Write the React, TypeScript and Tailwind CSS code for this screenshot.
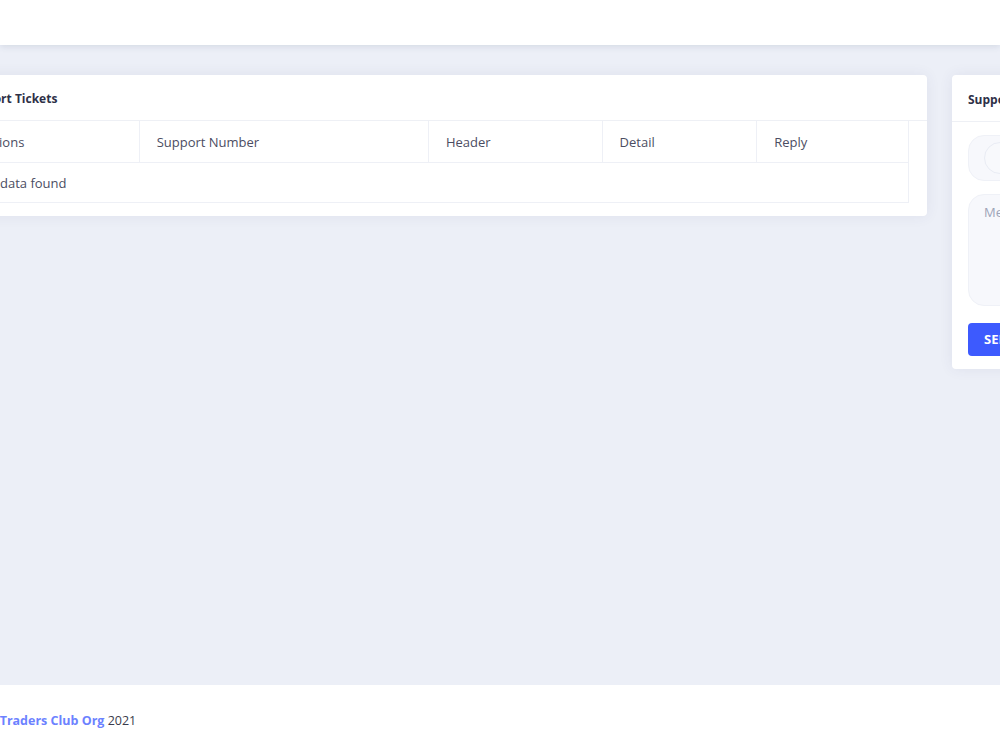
import React from "react";

const columns = [
  { label: "Actions", w: "w-[177px]" },
  { label: "Support Number", w: "w-[290px]" },
  { label: "Header", w: "w-[174px]" },
  { label: "Detail", w: "w-[155px]" },
  { label: "Reply", w: "w-[152px]" },
];

export default function App() {
  return (
    <div
      className="w-[1000px] h-[750px] overflow-hidden flex flex-col bg-[#eceff7] text-[#3d3f52]"
      style={{ fontFamily: '"Open Sans", "Noto Sans", sans-serif' }}
    >
      {/* Top bar */}
      <header className="h-[45px] shrink-0 bg-white shadow-[0_2px_6px_rgba(60,70,110,0.12)] relative z-10" />

      {/* Content */}
      <main className="flex-1 pt-[30px]">
        <div className="flex items-start gap-[25px] ml-[-56px]">
          {/* Tickets list */}
          <section className="w-[983px] shrink-0 bg-white rounded-[4px] shadow-[0_0_14px_rgba(60,70,120,0.08)] pb-[13px]">
            <div className="h-[46px] pt-[3px] flex items-center px-[20px] border-b border-[#eef0f5]">
              <h2 className="text-[12px] font-bold text-[#2e3047]">Support Tickets</h2>
            </div>
            <div className="px-[18px]">
              <table className="border-collapse text-[13px] text-[#4b4d62]">
                <thead>
                  <tr className="h-[41px]">
                    {columns.map((c) => (
                      <th
                        key={c.label}
                        className={`${c.w} text-left font-normal pl-[17px] pr-2 pt-[3px] border border-t-0 border-[#eef0f6]`}
                      >
                        {c.label}
                      </th>
                    ))}
                  </tr>
                </thead>
                <tbody>
                  <tr className="h-[40px]">
                    <td colSpan={5} className="px-[16px] pt-[3px] border border-[#eef0f6]">
                      No data found
                    </td>
                  </tr>
                </tbody>
              </table>
            </div>
          </section>

          {/* New ticket form */}
          <section className="w-[400px] shrink-0 bg-white rounded-[4px] shadow-[0_0_14px_rgba(60,70,120,0.08)] pb-[13px]">
            <div className="h-[47px] pt-[3px] flex items-center px-4 border-b border-[#eef0f5]">
              <h2 className="text-[12px] font-bold text-[#2e3047]">Support Request</h2>
            </div>
            <div className="px-4 pt-[13px] flex flex-col">
              <div className="h-[46px] rounded-2xl bg-[#f7f8fc] border border-[#eff1f7] flex items-center px-[15px]">
                <span className="w-[32px] h-[32px] rounded-full border border-[#e9ecf4] bg-[#f8f9fc]" />
                <span className="ml-3 text-[13px] text-[#9aa0b4]">Header</span>
              </div>
              <textarea
                placeholder="Message"
                className="mt-[13px] h-[112px] resize-none rounded-2xl bg-[#f7f8fc] border border-[#eff1f7] px-[15px] py-[8px] text-[13px] placeholder:text-[#9ea4b8] outline-none"
              />
              <div className="mt-[17px]">
                <button className="h-[33px] px-4 rounded-[4px] bg-[#3d5afe] text-white text-[13px] font-bold">
                  SEND
                </button>
              </div>
            </div>
          </section>
        </div>
      </main>

      {/* Footer */}
      <footer className="h-[65px] shrink-0 bg-white flex items-center pt-[7px]">
        <p className="text-[12.5px] ml-[-14px] text-[#3a3b4c]">
          ©{" "}
          <span className="font-bold text-[#6c82ff]">Traders Club Org</span> 2021
        </p>
      </footer>
    </div>
  );
}
